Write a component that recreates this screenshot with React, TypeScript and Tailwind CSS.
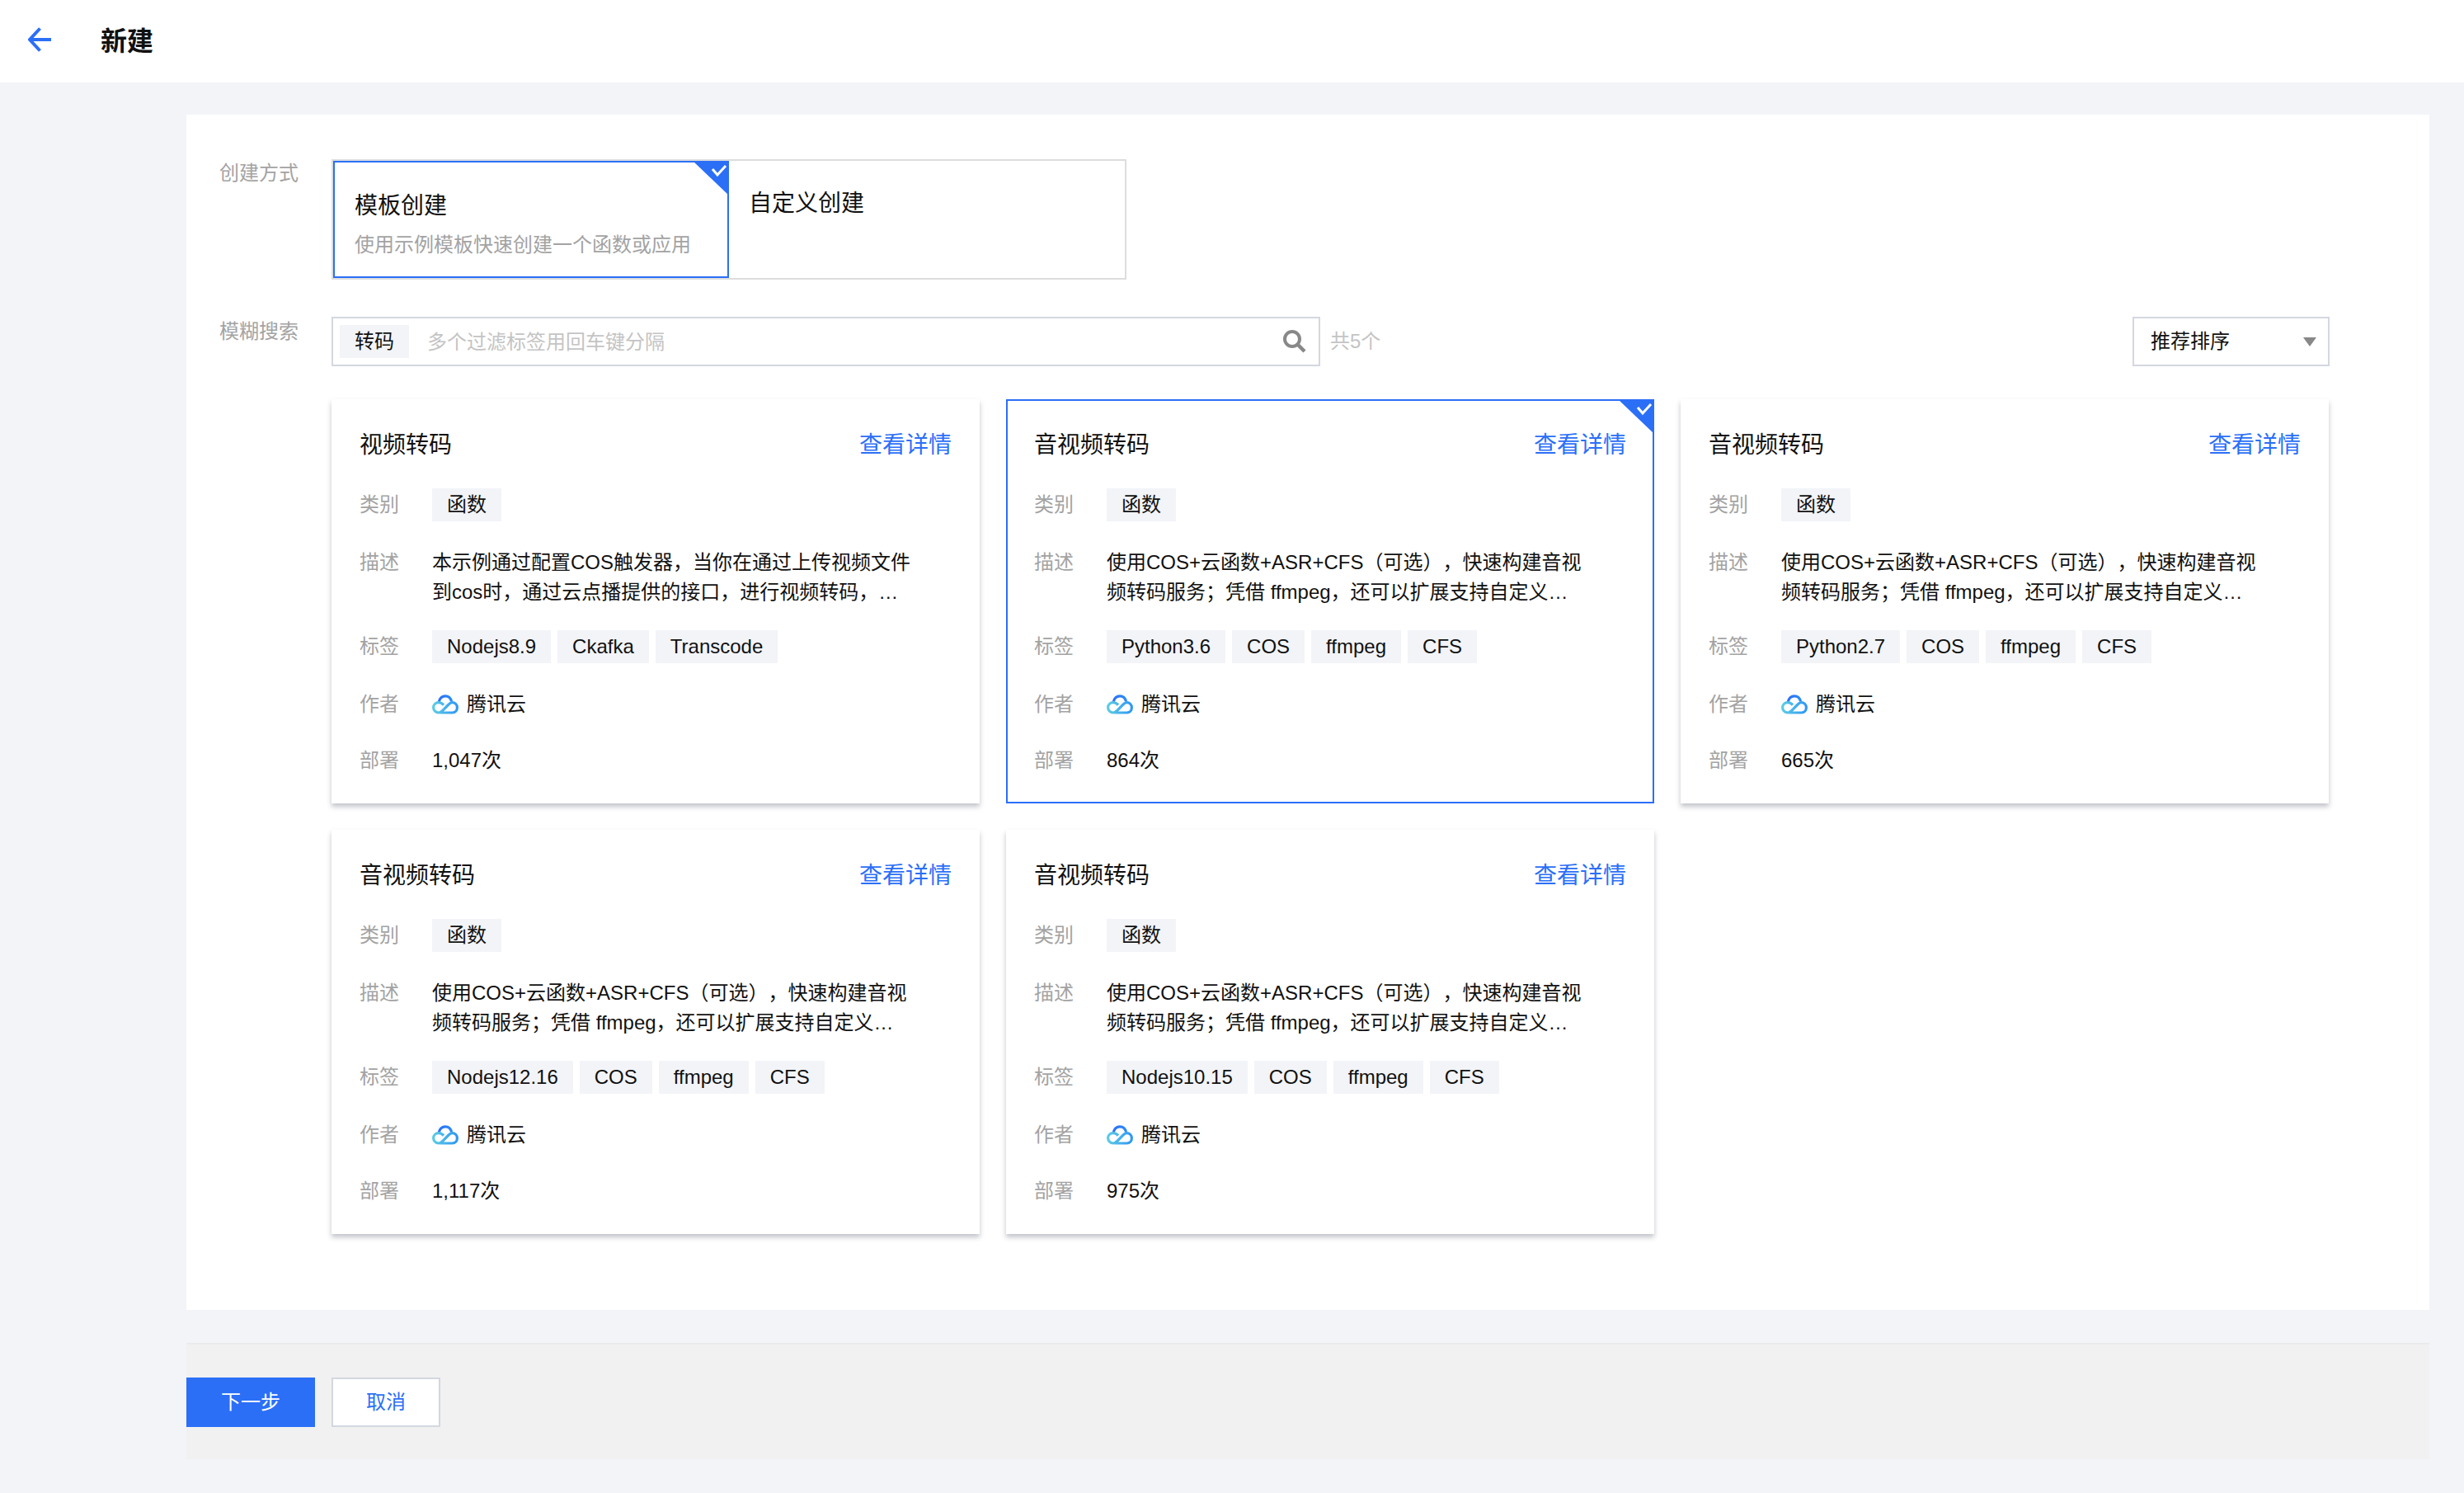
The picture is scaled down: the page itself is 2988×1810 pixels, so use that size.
const BLUE = '#2b6ff7';

type CardData = {
  title: string;
  lines: string[];
  tags: string[];
  count: string;
  selected?: boolean;
};

const avDesc = [
  '使用COS+云函数+ASR+CFS（可选），快速构建音视',
  '频转码服务；凭借 ffmpeg，还可以扩展支持自定义…',
];

const cards: CardData[] = [
  {
    title: '视频转码',
    lines: ['本示例通过配置COS触发器，当你在通过上传视频文件', '到cos时，通过云点播提供的接口，进行视频转码，…'],
    tags: ['Nodejs8.9', 'Ckafka', 'Transcode'],
    count: '1,047次',
  },
  { title: '音视频转码', lines: avDesc, tags: ['Python3.6', 'COS', 'ffmpeg', 'CFS'], count: '864次', selected: true },
  { title: '音视频转码', lines: avDesc, tags: ['Python2.7', 'COS', 'ffmpeg', 'CFS'], count: '665次' },
  { title: '音视频转码', lines: avDesc, tags: ['Nodejs12.16', 'COS', 'ffmpeg', 'CFS'], count: '1,117次' },
  { title: '音视频转码', lines: avDesc, tags: ['Nodejs10.15', 'COS', 'ffmpeg', 'CFS'], count: '975次' },
];

function CornerCheck() {
  return (
    <svg className="absolute -top-[2px] -right-[2px]" width="44" height="42" viewBox="0 0 44 42">
      <path d="M0 0H44V42Z" fill={BLUE} />
      <path d="M24 10L30 17L40 6" fill="none" stroke="#fff" strokeWidth="3" />
    </svg>
  );
}

function CloudLogo() {
  return (
    <svg width="32" height="24" viewBox="0 0 32 24" className="shrink-0">
      <defs>
        <linearGradient id="cloudTop" x1="0" y1="0" x2="1" y2="0">
          <stop offset="0" stopColor="#2b6ff7" />
          <stop offset="1" stopColor="#2b8cf7" />
        </linearGradient>
        <linearGradient id="cloudBottom" x1="0" y1="0" x2="1" y2="0">
          <stop offset="0" stopColor="#5ccbe4" />
          <stop offset="1" stopColor="#2f97f5" />
        </linearGradient>
      </defs>
      <path d="M8 9.5C9 4.5 12.4 1.8 16 1.8C19.6 1.8 22.6 4.3 23.6 8.5" fill="none" stroke="url(#cloudTop)" strokeWidth="3.2" />
      <path
        d="M10 22H24.5C28 22 30.4 19.2 30.4 15.8C30.4 12.2 27.6 9.6 24.2 9.6C19.5 9.6 13.5 22 8 22C4.4 22 1.6 19.2 1.6 15.8C1.6 12.2 4.4 9.6 8 9.6C10.4 9.6 12.3 10.8 14 12.6"
        fill="none"
        stroke="url(#cloudBottom)"
        strokeWidth="3.2"
      />
    </svg>
  );
}

function Row({ label, children, className }: { label: string; children: React.ReactNode; className?: string }) {
  return (
    <div className={`flex ${className ?? ''}`}>
      <div className="w-[88px] shrink-0 leading-[40px] text-[#a3a3a3]">{label}</div>
      {children}
    </div>
  );
}

function Tag({ text }: { text: string }) {
  return <span className="h-[40px] px-[18px] bg-[#f2f4f8] leading-[40px] text-[#111] whitespace-nowrap">{text}</span>;
}

function TemplateCard({ card }: { card: CardData }) {
  return (
    <div
      className={`relative h-[490px] bg-white border-2 px-[32px] pt-[34px] ${
        card.selected ? 'border-[#2b6ff7]' : 'border-transparent shadow-[0_4px_6px_0_rgba(54,58,80,0.3)]'
      }`}
    >
      {card.selected && <CornerCheck />}
      <div className="flex justify-between items-center h-[40px]">
        <span className="text-[28px] text-[#111]">{card.title}</span>
        <a className="text-[28px] text-[#2b6ff7]">查看详情</a>
      </div>
      <Row label="类别" className="mt-[32px]">
        <Tag text="函数" />
      </Row>
      <div className="flex mt-[32px]">
        <div className="w-[88px] shrink-0 leading-[36px] text-[#a3a3a3]">描述</div>
        <div className="leading-[36px] text-[#111] whitespace-nowrap">
          {card.lines.map((line) => (
            <div key={line}>{line}</div>
          ))}
        </div>
      </div>
      <Row label="标签" className="mt-[28px]">
        <div className="flex gap-[8px]">
          {card.tags.map((t) => (
            <Tag key={t} text={t} />
          ))}
        </div>
      </Row>
      <Row label="作者" className="mt-[30px]">
        <div className="flex items-center gap-[10px] text-[#111]">
          <CloudLogo />
          <span>腾讯云</span>
        </div>
      </Row>
      <Row label="部署" className="mt-[28px]">
        <span className="leading-[40px] text-[#111]">{card.count}</span>
      </Row>
    </div>
  );
}

export default function App() {
  return (
    <div className="w-[2988px] h-[1810px] bg-[#f2f4f8] text-[24px] overflow-hidden [text-spacing-trim:space-all] font-['Liberation_Sans','Noto_Sans_CJK_SC',sans-serif]">
      <header className="h-[100px] bg-white flex items-center pl-[34px]">
        <svg width="30" height="30" viewBox="0 0 30 30" className="text-[#2b6ff7] -mt-[4px]">
          <path d="M14.5 1.5L2 15L14.5 28.5M3 15H28" fill="none" stroke="currentColor" strokeWidth="4" />
        </svg>
        <h1 className="ml-[58px] text-[32px] font-bold text-[#111]">新建</h1>
      </header>

      <main className="ml-[226px] mr-[42px] mt-[39px] h-[1449px] bg-white pl-[40px] pt-[54px]">
        <div className="flex">
          <div className="w-[136px] leading-[34px] text-[#a3a3a3]">创建方式</div>
          <div className="flex w-[964px] h-[146px] border-2 border-[#dddddd]">
            <div className="relative w-[480px] h-[142px] border-2 border-[#2b6ff7] pl-[24px] pt-[33px]">
              <CornerCheck />
              <div className="text-[28px] text-[#111] leading-[40px]">模板创建</div>
              <div className="mt-[9px] text-[#a3a3a3] leading-[36px]">使用示例模板快速创建一个函数或应用</div>
            </div>
            <div className="flex-1 pl-[24px] pt-[32px]">
              <div className="text-[28px] text-[#111] leading-[40px]">自定义创建</div>
            </div>
          </div>
        </div>

        <div className="flex mt-[45px] w-[2559px]">
          <div className="w-[136px] leading-[36px] text-[#a3a3a3]">模糊搜索</div>
          <div className="flex flex-1 items-center h-[60px]">
            <div className="flex items-center w-[1199px] h-[60px] border-2 border-[#d3d7e0] pl-[8px] pr-[14px]">
              <span className="h-[40px] w-[84px] bg-[#f2f4f8] text-center leading-[40px] text-[#111]">转码</span>
              <span className="ml-[22px] flex-1 text-[#c4c4c4] pt-[2px]">多个过滤标签用回车键分隔</span>
              <svg width="30" height="30" viewBox="0 0 30 30">
                <circle cx="12" cy="12" r="9" fill="none" stroke="#888" strokeWidth="4" />
                <path d="M18.5 18.5L27 27" stroke="#888" strokeWidth="4.5" />
              </svg>
            </div>
            <span className="ml-[12px] text-[#c4c4c4]">共5个</span>
            <div className="ml-auto flex items-center justify-between w-[239px] h-[60px] border-2 border-[#d3d7e0] pl-[20px] pr-[14px] text-[#111]">
              <span>推荐排序</span>
              <svg width="16" height="12" viewBox="0 0 16 12">
                <path d="M0 1H16L8 12Z" fill="#888" />
              </svg>
            </div>
          </div>
        </div>

        <div className="grid grid-cols-[786px_786px_786px] gap-[32px] ml-[136px] mt-[40px]">
          {cards.map((c, i) => (
            <TemplateCard key={i} card={c} />
          ))}
        </div>
      </main>

      <footer className="ml-[226px] mr-[42px] mt-[40px] h-[141px] bg-[#f1f1f1] border-t-2 border-[#ebebeb] flex items-center gap-[20px]">
        <button className="w-[156px] h-[60px] bg-[#2b6ff7] text-white">下一步</button>
        <button className="w-[132px] h-[60px] bg-white border-2 border-[#d3d7e0] text-[#2b6ff7]">取消</button>
      </footer>
    </div>
  );
}
